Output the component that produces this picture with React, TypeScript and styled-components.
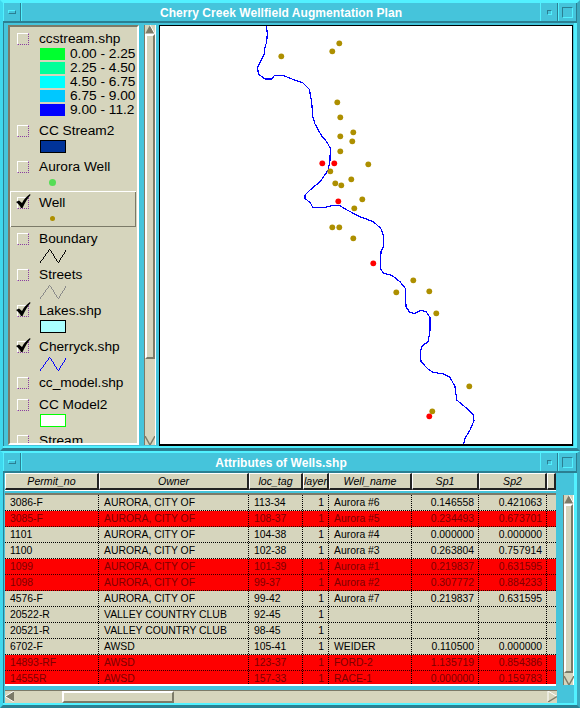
import React from "react";
import styled, { createGlobalStyle } from "styled-components";

const TEAL = "#45c4db";
const LIGHT = "#52f1ff";
const DARK = "#2b7f92";
const TAN = "#d6d5bd";
const SHADE = "#7b7a68";

const Global = createGlobalStyle`
  html, body { margin: 0; padding: 0; background: ${TEAL}; }
  #root { width: 580px; height: 708px; overflow: hidden; }
  * { box-sizing: border-box; }
`;

const Screen = styled.div`
  width: 580px;
  height: 708px;
  display: flex;
  flex-direction: column;
  font-family: "Liberation Sans", Arial, sans-serif;
`;

const Window = styled.section<{ $h: number; $top: number }>`
  height: ${(p) => p.$h}px;
  flex: none;
  display: flex;
  flex-direction: column;
  background: ${TEAL};
  border-style: solid;
  border-width: ${(p) => p.$top}px 3px 3px 3px;
  border-color: ${LIGHT} #3aa9bf ${DARK} #3fd8ee;
  box-shadow: inset -3px -2px 0 ${LIGHT}, inset 1px 0 0 ${DARK};
`;

const TitleBar = styled.header`
  height: 20px;
  flex: none;
  display: flex;
  background: ${TEAL};
  border-bottom: 2px solid ${DARK};
`;

const TitleCell = styled.div<{ $w: number }>`
  width: ${(p) => p.$w}px;
  flex: none;
  display: flex;
  align-items: center;
  justify-content: center;
  border-left: 1px solid ${LIGHT};
  border-right: 1px solid ${DARK};
`;

const MenuGlyph = styled.div`
  width: 8px;
  height: 4px;
  background: ${TEAL};
  border: 1px solid;
  border-color: ${LIGHT} ${DARK} ${DARK} ${LIGHT};
`;

const MinGlyph = styled.div`
  width: 5px;
  height: 5px;
  background: ${TEAL};
  border: 1px solid;
  border-color: ${DARK} ${LIGHT} ${LIGHT} ${DARK};
`;

const MaxGlyph = styled.div`
  width: 11px;
  height: 11px;
  border: 1px solid;
  border-color: ${DARK} ${LIGHT} ${LIGHT} ${DARK};
`;

const Title = styled.h1`
  flex: 1;
  margin: 0;
  text-align: center;
  color: #fff;
  font-size: 12px;
  line-height: 20px;
  height: 18px;
  font-weight: 700;
  letter-spacing: 0.05px;
  border-left: 1px solid ${LIGHT};
`;

const MapBody = styled.div`
  flex: 1;
  min-height: 0;
  display: flex;
  padding: 2px 4px 2px 5px;
`;

const Legend = styled.aside`
  width: 131px;
  flex: none;
  height: 420px;
  background: ${TAN};
  border-style: solid;
  border-width: 2px;
  border-color: ${SHADE} #fff #fff ${SHADE};
  overflow: hidden;
`;

const LegendItem = styled.div<{ $selected?: boolean }>`
  display: flex;
  align-items: flex-start;
  padding-left: 7px;
  ${(p) =>
    p.$selected
      ? `box-shadow: inset 1px 1px 0 #fff, inset -1px -1px 0 ${SHADE}; margin-right: 1px;`
      : ""}
`;

const CheckBox = styled.span`
  position: relative;
  flex: none;
  width: 12px;
  height: 12px;
  margin-top: 6px;
  border-style: solid;
  border-width: 1px;
  border-color: #fff;
  border-right: 1px dotted #8a3fa0;
  border-bottom: 1px dotted #8a3fa0;
`;

const CheckMark = styled.svg`
  position: absolute;
  left: -2px;
  top: -4px;
  width: 15px;
  height: 15px;
`;

const LegendBody = styled.div`
  margin-left: 10px;
  display: flex;
  flex-direction: column;
`;

const LegendLabel = styled.div`
  height: 22px;
  line-height: 24px;
  font-size: 13.7px;
  color: #000;
  white-space: nowrap;
`;

const SymbolSlot = styled.div`
  width: 28px;
  height: 14px;
  display: flex;
  justify-content: flex-start;
  padding-left: 1px;
`;

const BinList = styled.div`
  margin: -2px 0 2px;
  display: flex;
  flex-direction: column;
`;

const BinRow = styled.div`
  height: 14px;
  display: flex;
  align-items: flex-start;
  padding: 1px 0 0 1px;
  gap: 5px;
  font-size: 13.7px;
  line-height: 11px;
  color: #000;
  white-space: nowrap;
`;

const BinSwatch = styled.span<{ $c: string }>`
  width: 25px;
  height: 12px;
  background: ${(p) => p.$c};
`;

const FillSwatch = styled.span<{ $c: string; $line: string }>`
  width: 26px;
  height: 13px;
  margin-top: -1px;
  background: ${(p) => p.$c};
  border: 1px solid ${(p) => p.$line};
`;

const MarkerDot = styled.span<{ $size: number; $c: string }>`
  width: ${(p) => p.$size}px;
  height: ${(p) => p.$size}px;
  margin-top: ${(p) => 5 - p.$size / 2}px;
  margin-left: ${(p) => 12 - p.$size / 2}px;
  border-radius: 50%;
  background: ${(p) => p.$c};
`;

const VBar = styled.div<{ $w: number; $h: number }>`
  width: ${(p) => p.$w}px;
  height: ${(p) => p.$h}px;
  flex: none;
  display: flex;
  flex-direction: column;
  background: ${TAN};
  border-left: 1px solid ${SHADE};
  border-right: 1px solid #fff;
`;

const VThumb = styled.div<{ $h: number }>`
  height: ${(p) => p.$h}px;
  flex: none;
  background: ${TAN};
  border-style: solid;
  border-width: 2px;
  border-color: #fff ${SHADE} ${SHADE} #fff;
`;

const ArrowIcon = styled.svg`
  flex: none;
  display: block;
`;

const MapBarSlot = styled.div`
  margin-left: 5px;
  margin-right: 3px;
  flex: none;
`;

const MapView = styled.main`
  flex: 1;
  height: 421px;
  background: #fff;
  border: 1px solid #000;
  border-bottom-width: 2px;
  overflow: hidden;
`;

const MapSvg = styled.svg`
  display: block;
  width: 100%;
  height: 100%;
`;

const TableBody = styled.div`
  flex: 1;
  min-height: 0;
  display: flex;
  flex-direction: column;
  padding: 0 0 0 2px;
`;

const TableRowZone = styled.div`
  display: flex;
  align-items: flex-start;
`;

const TableCol = styled.div`
  width: 551px;
  flex: none;
`;

const COLS = "94px 150px 54px 26px 83px 67px 68px 9px";

const HeaderRow = styled.div`
  display: grid;
  grid-template-columns: ${COLS};
  height: 17px;
  background: ${TAN};
`;

const HeaderCell = styled.div`
  text-align: center;
  font-size: 10.6px;
  font-style: italic;
  line-height: 14px;
  color: #000;
  background: ${TAN};
  border-style: solid;
  border-width: 1px 2px 2px 1px;
  border-color: #fff #222 #222 #fff;
  white-space: nowrap;
  overflow: hidden;
`;

const HeaderGap = styled.div`
  height: 5px;
  border-top: 1px solid #fff;
  border-bottom: 2px solid ${SHADE};
  background: ${TEAL};
`;

const Rows = styled.div`
  height: 191px;
  overflow: hidden;
  border-bottom: 2px solid #fff;
`;

const Row = styled.div<{ $alert?: boolean }>`
  display: grid;
  grid-template-columns: ${COLS};
  height: 16px;
  background: ${(p) => (p.$alert ? "#fe0000" : TAN)};
  color: ${(p) => (p.$alert ? "#7d0000" : "#000")};
  border-bottom: 1px dotted ${(p) => (p.$alert ? "#300" : "#000")};
`;

const Cell = styled.div<{ $right?: boolean }>`
  font-size: 10.4px;
  line-height: 16px;
  padding: 0 ${(p) => (p.$right ? "4px" : "0")} 0 ${(p) => (p.$right ? "0" : "5px")};
  text-align: ${(p) => (p.$right ? "right" : "left")};
  border-right: 1px dotted #000;
  white-space: nowrap;
  overflow: hidden;
  &:last-child { border-right: none; }
`;

const TableBarSlot = styled.div`
  margin-left: 7px;
  margin-top: 22px;
`;

const HBar = styled.div`
  height: 13px;
  margin-top: 4px;
  width: 552px;
  flex: none;
  display: flex;
  align-items: stretch;
  background: ${TAN};
  border-top: 1px solid ${SHADE};
`;

const HThumb = styled.div`
  width: 112px;
  flex: none;
  margin-left: 47px;
  background: ${TAN};
  border-style: solid;
  border-width: 2px;
  border-color: #fff ${SHADE} ${SHADE} #fff;
`;

const HSpacer = styled.div`
  flex: 1;
`;

const Up = () => (
  <ArrowIcon width="10" height="9" viewBox="0 0 10 9">
    <polygon points="5,0 10,9 0,9" fill={SHADE} />
    <polyline points="5,0 10,9 0,9" fill="none" stroke="#fff" strokeWidth="1" />
  </ArrowIcon>
);
const Down = () => (
  <ArrowIcon width="10" height="9" viewBox="0 0 10 9">
    <polygon points="0,0 10,0 5,9" fill={TAN} />
    <polyline points="0,0 5,9 10,0" fill="none" stroke={SHADE} strokeWidth="1.4" />
  </ArrowIcon>
);
const Left = () => (
  <ArrowIcon width="10" height="11" viewBox="0 0 10 11">
    <polygon points="0,5.5 9,0 9,11" fill={SHADE} />
    <polyline points="9,0 0,5.5 9,11" fill="none" stroke="#fff" strokeWidth="1" />
  </ArrowIcon>
);
const Right = () => (
  <ArrowIcon width="10" height="11" viewBox="0 0 10 11">
    <polygon points="10,5.5 1,0 1,11" fill={TAN} />
    <polyline points="1,11 1,0 10,5.5" fill="none" stroke="#fff" strokeWidth="1" />
    <line x1="1" y1="11" x2="10" y2="5.5" stroke={SHADE} strokeWidth="1.4" />
  </ArrowIcon>
);

const Zig = ({ c }: { c: string }) => (
  <svg width="28" height="15" viewBox="0 0 28 15" shapeRendering="crispEdges">
    <polyline points="0,14 10,0 19,14 27,1" fill="none" stroke={c} strokeWidth="1" />
  </svg>
);

const Check = () => (
  <CheckMark viewBox="0 0 15 15">
    <path d="M0 8 L3 6.5 L6 9 C8 5 10.5 2.5 14 0 L14.5 1 C11.5 4.5 9 8.5 6.5 14 L5 14 C4 11.5 2 9.5 0 8 Z" fill="#000" />
  </CheckMark>
);

type Item = { label: string; checked?: boolean; selected?: boolean; symbol?: React.ReactNode };

const bins: [string, string][] = [
  ["#00ff2f", "0.00 - 2.25"],
  ["#00ff99", "2.25 - 4.50"],
  ["#00ffff", "4.50 - 6.75"],
  ["#00c8ff", "6.75 - 9.00"],
  ["#0000ff", "9.00 - 11.2"],
];

const items: Item[] = [
  { label: "CC Stream2", symbol: <FillSwatch $c="#003399" $line="#000" /> },
  { label: "Aurora Well", symbol: <MarkerDot $size={7} $c="#55dd55" /> },
  { label: "Well", checked: true, selected: true, symbol: <MarkerDot $size={5} $c="#ad8f00" /> },
  { label: "Boundary", symbol: <Zig c="#000" /> },
  { label: "Streets", symbol: <Zig c="#888" /> },
  { label: "Lakes.shp", checked: true, symbol: <FillSwatch $c="#aaffff" $line="#000" /> },
  { label: "Cherryck.shp", checked: true, symbol: <Zig c="#0000ff" /> },
  { label: "cc_model.shp" },
  { label: "CC Model2", symbol: <FillSwatch $c="#fff" $line="#00ff00" /> },
  { label: "Stream" },
];

const RIVER =
  "266.3,25 267.3,33.3 266.7,41.7 264.7,48.3 264,55 260.7,60.7 257.7,67.3 258.3,74 265,79 271.7,79 274.3,75.7 284,75.7 292.7,79.3 302.7,82.7 309.3,89.3 311.7,101.7 312.7,116.7 315,124 321.7,136 326.7,141.7 330.3,148.3 330,160 328.3,170 320,181.7 310,190 305,195 305,198.3 310.7,203.3 312.7,207.3 325,207.3 333.3,205.3 340,205.7 348.3,210.7 360,216.7 373.3,221.7 380.7,228.3 383.3,235 383.3,246.7 381,251.7 380.3,268.3 383.3,273.3 391.7,275.3 400,281.7 405.3,288.3 406,306.7 410,312.7 415,313.3 420.7,310.3 426,311.7 430,317.3 430,330 428.3,341.7 422.3,345.7 420.3,351.7 421,361.7 428.3,369.3 433.3,372.3 443.3,374 450,377.3 455,386.7 456.7,400 466.7,408.3 473.3,415 474,420.7 470,430 465,438.3 463.3,445";

const GOLD = [
  [339.3, 43.3], [332.3, 51.3], [281.3, 56.3], [337.3, 102.3], [340.3, 117.3], [353.3, 132.3],
  [340.3, 136.3], [352.3, 141.3], [340.3, 151.3], [368.3, 164.3], [330.3, 171.3], [351.3, 179.3],
  [335.3, 183.3], [341.3, 185.3], [362.3, 199.3], [354.3, 208.3], [332.3, 227.3], [339.3, 227.3],
  [353.3, 238.3], [413.3, 280.3], [429.3, 291.3], [396.3, 292.3], [436.3, 313.3], [469.3, 386.3],
  [432.3, 411.3],
];
const RED = [
  [322.3, 163.3], [334.3, 163.3], [338.3, 201.3], [373.3, 263.3], [429.3, 416.3],
];

const HEAD = ["Permit_no", "Owner", "loc_tag", "layer", "Well_name", "Sp1", "Sp2", ""];
const AUR = "AURORA, CITY OF";
const VAL = "VALLEY COUNTRY CLUB";
const DATA: [string, string, string, string, string, string, boolean?][] = [
  ["3086-F", AUR, "113-34", "Aurora #6", "0.146558", "0.421063"],
  ["3085-F", AUR, "108-37", "Aurora #5", "0.234493", "0.673701", true],
  ["1101", AUR, "104-38", "Aurora #4", "0.000000", "0.000000"],
  ["1100", AUR, "102-38", "Aurora #3", "0.263804", "0.757914"],
  ["1099", AUR, "101-39", "Aurora #1", "0.219837", "0.631595", true],
  ["1098", AUR, "99-37", "Aurora #2", "0.307772", "0.884233", true],
  ["4576-F", AUR, "99-42", "Aurora #7", "0.219837", "0.631595"],
  ["20522-R", VAL, "92-45", "", "", ""],
  ["20521-R", VAL, "98-45", "", "", ""],
  ["6702-F", "AWSD", "105-41", "WEIDER", "0.110500", "0.000000"],
  ["14893-RF", "AWSD", "123-37", "FORD-2", "1.135719", "0.854386", true],
  ["14555R", "AWSD", "157-33", "RACE-1", "0.000000", "0.159783", true],
];

const Bar = ({ title }: { title: string }) => (
  <TitleBar>
    <TitleCell $w={18}><MenuGlyph /></TitleCell>
    <Title>{title}</Title>
    <TitleCell $w={18}><MinGlyph /></TitleCell>
    <TitleCell $w={19}><MaxGlyph /></TitleCell>
  </TitleBar>
);

export default function App() {
  return (
    <Screen>
      <Global />
      <Window $h={451} $top={3}>
        <Bar title="Cherry Creek Wellfield Augmentation Plan" />
        <MapBody>
          <Legend>
            <LegendItem>
              <CheckBox />
              <LegendBody>
                <LegendLabel>ccstream.shp</LegendLabel>
                <BinList>
                  {bins.map(([c, t]) => (
                    <BinRow key={t}>
                      <BinSwatch $c={c} />
                      {t}
                    </BinRow>
                  ))}
                </BinList>
              </LegendBody>
            </LegendItem>
            {items.map((it) => (
              <LegendItem key={it.label} $selected={it.selected}>
                <CheckBox>{it.checked && <Check />}</CheckBox>
                <LegendBody>
                  <LegendLabel>{it.label}</LegendLabel>
                  {it.symbol && <SymbolSlot>{it.symbol}</SymbolSlot>}
                </LegendBody>
              </LegendItem>
            ))}
          </Legend>
          <MapBarSlot>
            <VBar $w={12} $h={420}>
              <Up />
              <VThumb $h={325} />
              <HSpacer />
              <Down />
            </VBar>
          </MapBarSlot>
          <MapView>
            <MapSvg viewBox="160 26 412 418" preserveAspectRatio="none">
              <polyline points={RIVER} fill="none" stroke="#0000ff" strokeWidth="1.2" shapeRendering="crispEdges" />
              {GOLD.map(([x, y]) => (
                <circle key={`${x}-${y}`} cx={x} cy={y} r="2.9" fill="#ad8f00" />
              ))}
              {RED.map(([x, y]) => (
                <circle key={`${x}-${y}`} cx={x} cy={y} r="2.9" fill="#ff0000" />
              ))}
            </MapSvg>
          </MapView>
        </MapBody>
      </Window>
      <Window $h={257} $top={2}>
        <Bar title="Attributes of Wells.shp" />
        <TableBody>
          <TableRowZone>
            <TableCol>
              <HeaderRow>
                {HEAD.map((h, i) => (
                  <HeaderCell key={i}>{h}</HeaderCell>
                ))}
              </HeaderRow>
              <HeaderGap />
              <Rows>
                {DATA.map(([a, b, c, d, e, f, alert]) => (
                  <Row key={a} $alert={alert}>
                    <Cell>{a}</Cell>
                    <Cell>{b}</Cell>
                    <Cell>{c}</Cell>
                    <Cell $right>1</Cell>
                    <Cell>{d}</Cell>
                    <Cell $right>{e}</Cell>
                    <Cell $right>{f}</Cell>
                    <Cell />
                  </Row>
                ))}
              </Rows>
            </TableCol>
            <TableBarSlot>
              <VBar $w={11} $h={190}>
                <Up />
                <VThumb $h={169} />
                <HSpacer />
                <Down />
              </VBar>
            </TableBarSlot>
          </TableRowZone>
          <HBar>
            <Left />
            <HThumb />
            <HSpacer />
            <Right />
          </HBar>
        </TableBody>
      </Window>
    </Screen>
  );
}
